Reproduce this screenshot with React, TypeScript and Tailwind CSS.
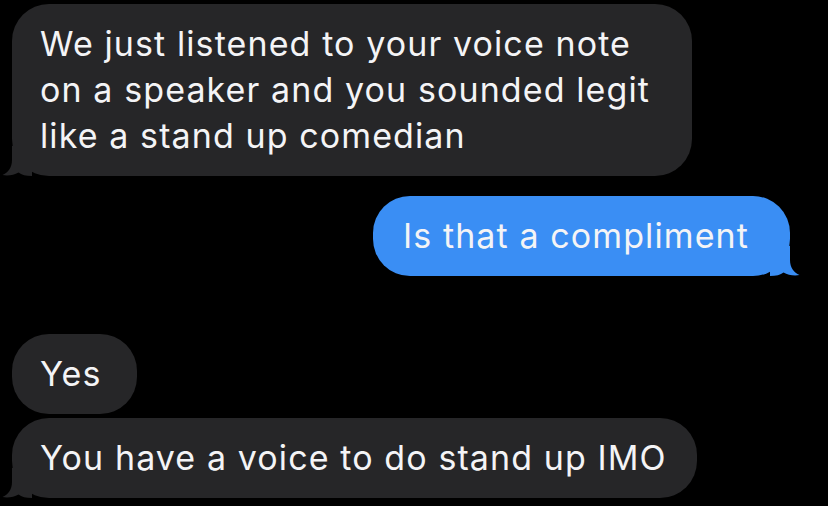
import React from 'react';

const grey = '#262628';
const blue = '#3a8ef4';

function TailLeft({ color }: { color: string }) {
  return (
    <svg className="absolute -left-[10px] bottom-0" width="30" height="30" viewBox="0 0 30 30">
      <path d="M10,0 L10,14 C10,21.5 6,26.5 0.5,29 C6,30 12,29 16.5,26.5 C19.5,29 24,30 30,30 L30,0 Z" fill={color} />
    </svg>
  );
}

function TailRight({ color }: { color: string }) {
  return (
    <svg className="absolute -right-[10px] bottom-0" width="30" height="30" viewBox="0 0 30 30">
      <path d="M20,0 L20,14 C20,21.5 24,26.5 29.5,29 C24,30 18,29 13.5,26.5 C10.5,29 6,30 0,30 L0,0 Z" fill={color} />
    </svg>
  );
}

function Bubble({
  children,
  width,
  side,
  tail,
}: {
  children: React.ReactNode;
  width: string;
  side: 'left' | 'right';
  tail?: boolean;
}) {
  const color = side === 'left' ? grey : blue;
  return (
    <div
      className={`relative rounded-[37px] py-[17px] text-[34px] leading-[46px] tracking-[1.1px] text-[#f4f4f6] whitespace-nowrap ${width} ${
        side === 'left' ? 'self-start pl-[28px]' : 'self-end pl-[30px]'
      }`}
      style={{ backgroundColor: color }}
    >
      {tail && (side === 'left' ? <TailLeft color={color} /> : <TailRight color={color} />)}
      <span className="relative">{children}</span>
    </div>
  );
}

export default function App() {
  return (
    <div
      className="w-[828px] h-[506px] bg-black overflow-hidden flex flex-col pt-[4px] pl-[12px] pr-[38px]"
      style={{ fontFamily: 'Inter, "Noto Sans", sans-serif' }}
    >
      <Bubble width="w-[680px]" side="left" tail>
        We just listened to your voice note
        <br />
        on a speaker and you sounded legit
        <br />
        like a stand up comedian
      </Bubble>

      <div className="mt-[20px] flex flex-col">
        <Bubble width="w-[417px]" side="right" tail>
          Is that a compliment
        </Bubble>
      </div>

      <div className="mt-[58px] flex flex-col gap-[4px]">
        <Bubble width="w-[125px]" side="left">
          Yes
        </Bubble>
        <Bubble width="w-[685px]" side="left" tail>
          You have a voice to do stand up IMO
        </Bubble>
      </div>
    </div>
  );
}
